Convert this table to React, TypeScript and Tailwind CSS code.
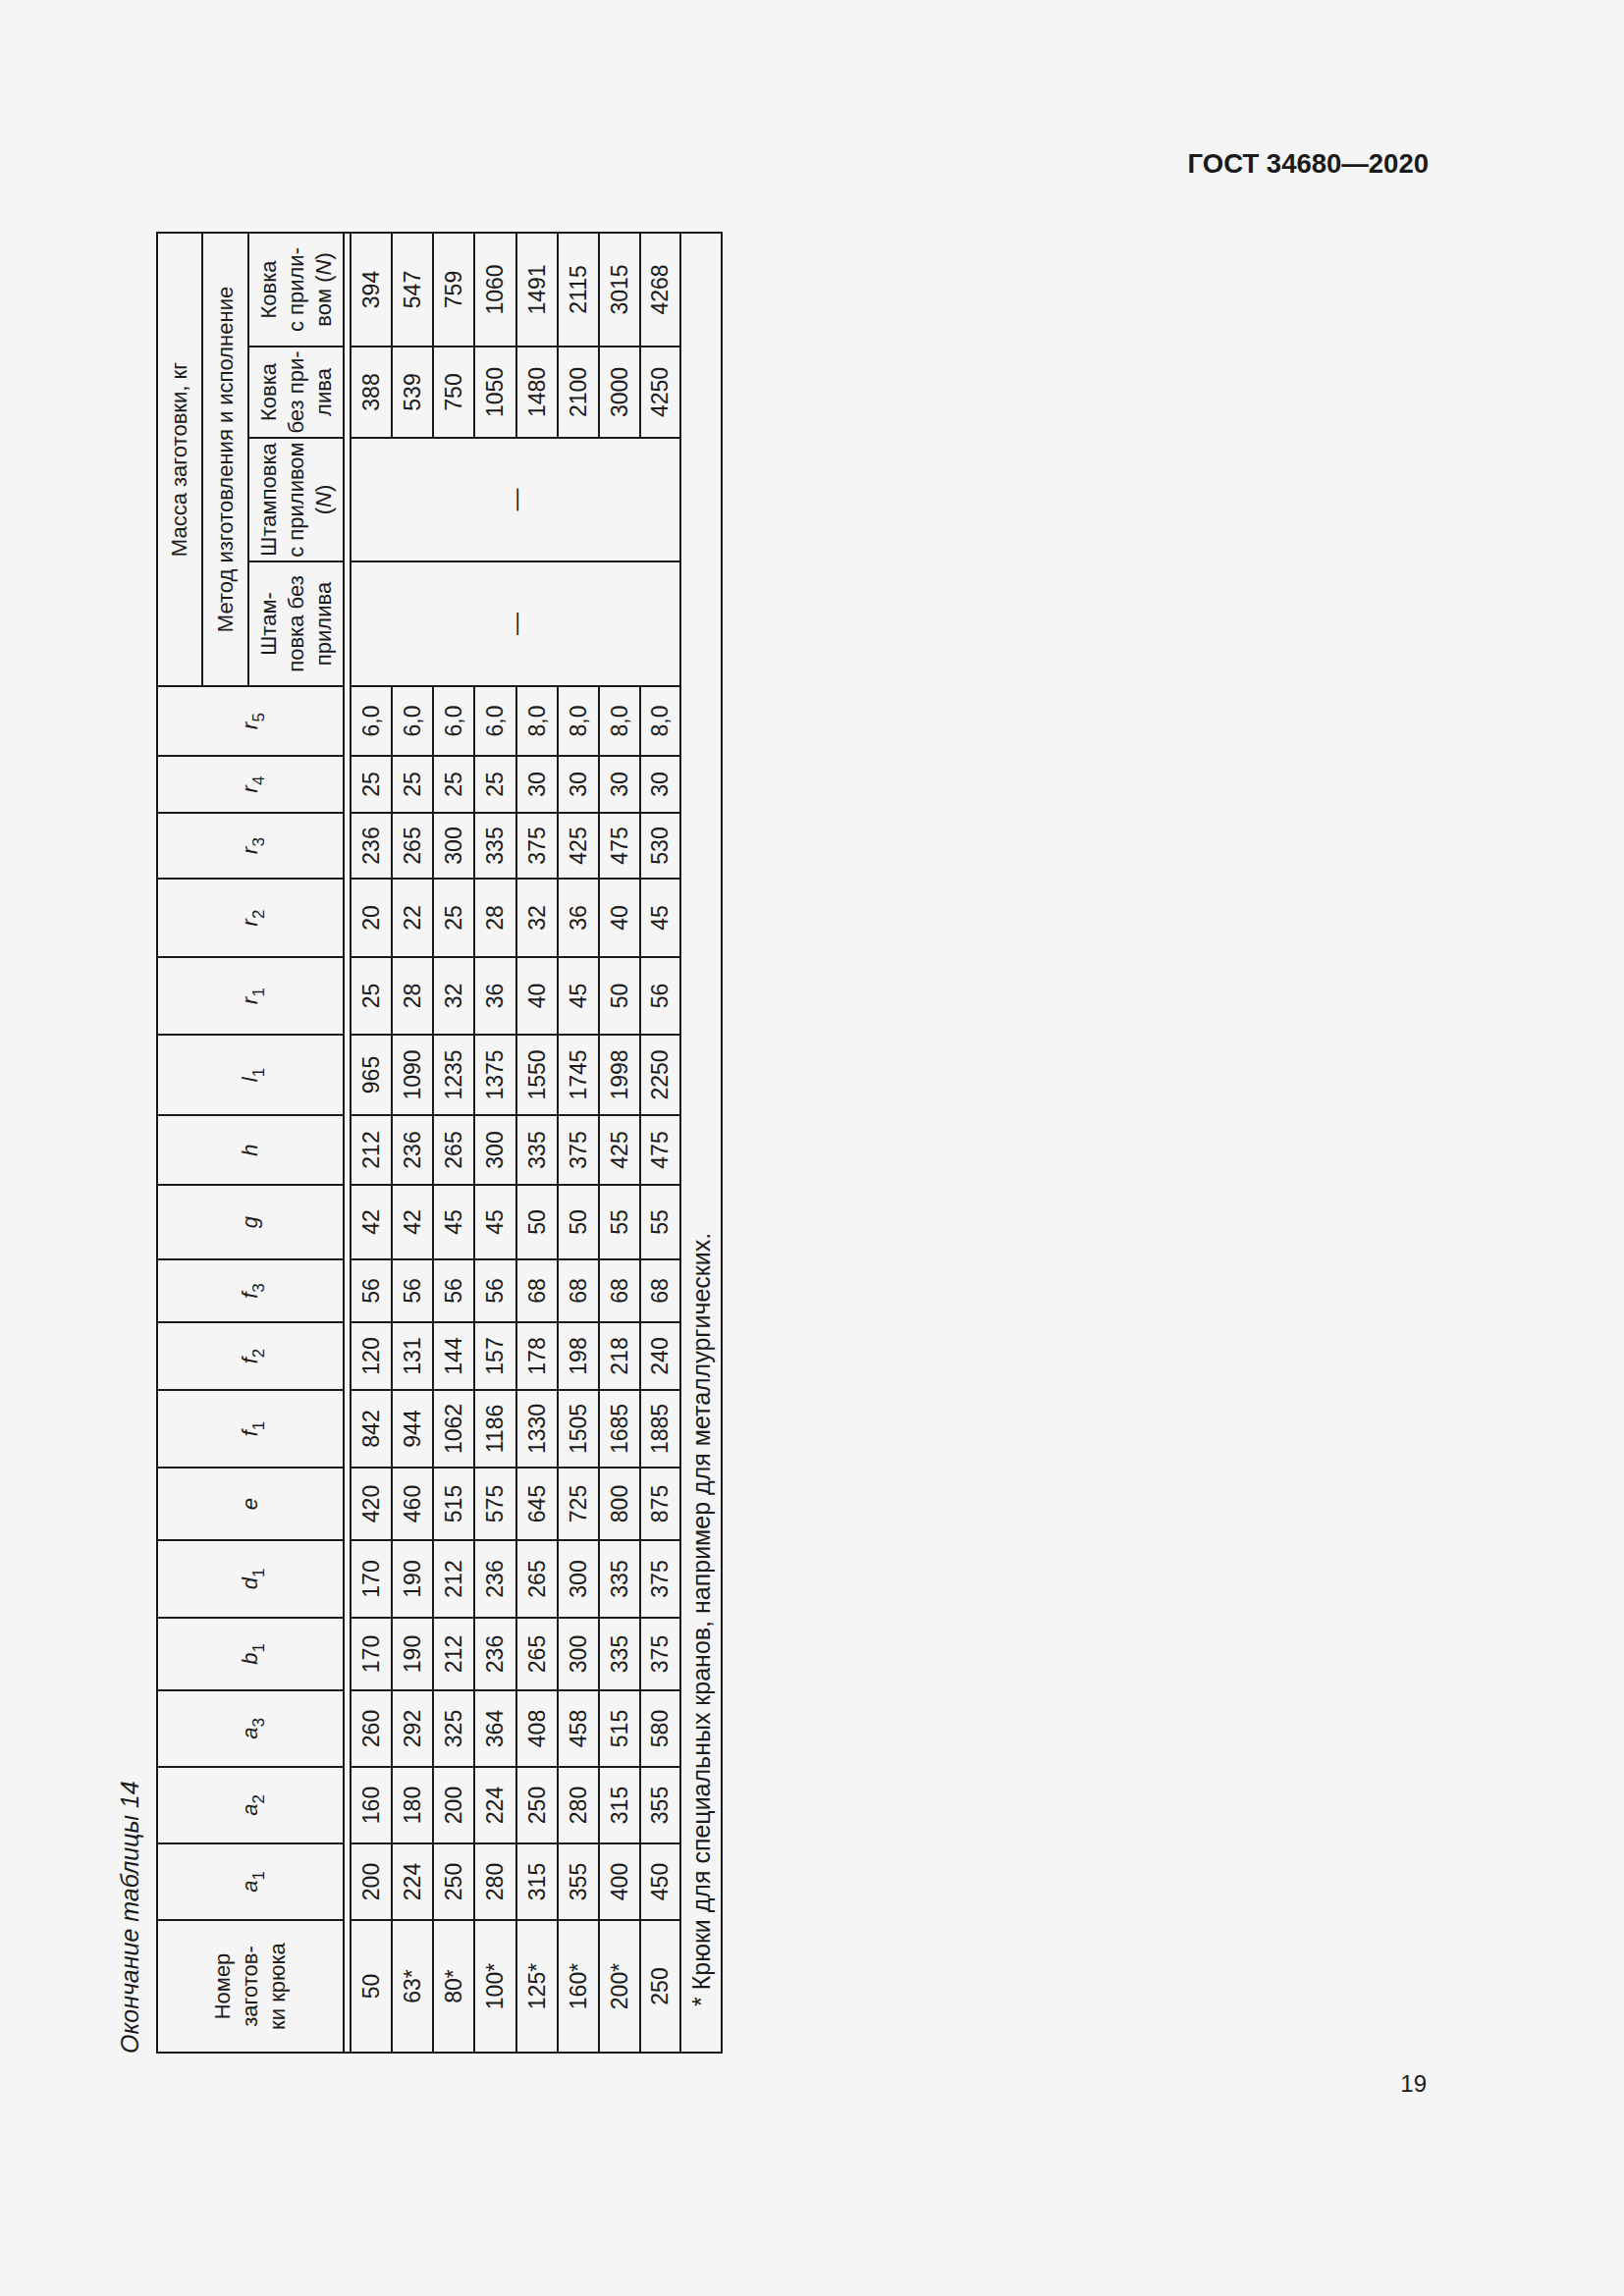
import React from 'react'

const colWidths = [
  'w-[135px]', 'w-[78px]', 'w-[78px]', 'w-[78px]', 'w-[74px]', 'w-[79px]', 'w-[74px]', 'w-[79px]',
  'w-[69px]', 'w-[64px]', 'w-[76px]', 'w-[71px]', 'w-[82px]', 'w-[79px]', 'w-[80px]', 'w-[67px]',
  'w-[58px]', 'w-[71px]', 'w-[127px]', 'w-[126px]', 'w-[93px]', 'w-[116px]',
]

const symbols: [string, string][] = [
  ['a', '1'], ['a', '2'], ['a', '3'], ['b', '1'], ['d', '1'], ['e', ''], ['f', '1'], ['f', '2'],
  ['f', '3'], ['g', ''], ['h', ''], ['l', '1'], ['r', '1'], ['r', '2'], ['r', '3'], ['r', '4'], ['r', '5'],
]

// one entry per hook blank: number, a1..r5, then forging masses
const rows = [
  { no: '50', v: ['200', '160', '260', '170', '170', '420', '842', '120', '56', '42', '212', '965', '25', '20', '236', '25', '6,0'], k1: '388', k2: '394' },
  { no: '63*', v: ['224', '180', '292', '190', '190', '460', '944', '131', '56', '42', '236', '1090', '28', '22', '265', '25', '6,0'], k1: '539', k2: '547' },
  { no: '80*', v: ['250', '200', '325', '212', '212', '515', '1062', '144', '56', '45', '265', '1235', '32', '25', '300', '25', '6,0'], k1: '750', k2: '759' },
  { no: '100*', v: ['280', '224', '364', '236', '236', '575', '1186', '157', '56', '45', '300', '1375', '36', '28', '335', '25', '6,0'], k1: '1050', k2: '1060' },
  { no: '125*', v: ['315', '250', '408', '265', '265', '645', '1330', '178', '68', '50', '335', '1550', '40', '32', '375', '30', '8,0'], k1: '1480', k2: '1491' },
  { no: '160*', v: ['355', '280', '458', '300', '300', '725', '1505', '198', '68', '50', '375', '1745', '45', '36', '425', '30', '8,0'], k1: '2100', k2: '2115' },
  { no: '200*', v: ['400', '315', '515', '335', '335', '800', '1685', '218', '68', '55', '425', '1998', '50', '40', '475', '30', '8,0'], k1: '3000', k2: '3015' },
  { no: '250', v: ['450', '355', '580', '375', '375', '875', '1885', '240', '68', '55', '475', '2250', '56', '45', '530', '30', '8,0'], k1: '4250', k2: '4268' },
]

const rowHeights = ['h-[42px]', 'h-[42px]', 'h-[42px]', 'h-[43px]', 'h-[42px]', 'h-[42px]', 'h-[42px]', 'h-[41px]']

const cell = 'border-2 border-[#1b1b1b] text-center align-middle p-0'
const head = 'border-2 border-[#1b1b1b] text-center align-middle p-0 font-normal text-[22px] leading-[28px]'

function Sym({ l, s }: { l: string; s: string }) {
  return (
    <span className="italic text-[22px]">
      {l}
      {s && <sub className="not-italic text-[17px] bottom-[-0.4em]">{s}</sub>}
    </span>
  )
}

export default function App() {
  return (
    <div className="w-[1654px] h-[2339px] bg-[#f5f5f5] text-[#1b1b1b] font-['Liberation_Sans',Arial,sans-serif] flex flex-col">
      <div className="pt-[151px] pr-[199px] text-right text-[27.5px] leading-[32px] font-bold">ГОСТ 34680—2020</div>

      {/* the table is printed sideways on the page */}
      <div className="mt-[53px] ml-[117px] w-[618px] h-[1856px]">
        <div className="w-[1856px] h-[618px] origin-top-left translate-y-[1856px] -rotate-90">
          <div className="italic text-[25px] leading-[30px] h-[30px]">Окончание таблицы 14</div>
          <table className="mt-[12px] w-[1856px] table-fixed border-collapse border-2 border-[#1b1b1b] text-[23px] leading-[27px]">
            <colgroup>
              {colWidths.map((w, i) => (
                <col key={i} className={w} />
              ))}
            </colgroup>
            <thead>
              <tr className="h-[46px]">
                <th rowSpan={3} className={head}>
                  Номер<br />заготов-<br />ки крюка
                </th>
                {symbols.map(([l, s], i) => (
                  <th key={i} rowSpan={3} className={head}>
                    <Sym l={l} s={s} />
                  </th>
                ))}
                <th colSpan={4} className={head}>Масса заготовки, кг</th>
              </tr>
              <tr className="h-[47px]">
                <th colSpan={4} className={head}>Метод изготовления и исполнение</th>
              </tr>
              <tr className="h-[97px]">
                <th className={head}>
                  Штам-<br />повка без<br />прилива
                </th>
                <th className={head}>
                  Штамповка<br />с приливом<br />(<span className="italic">N</span>)
                </th>
                <th className={head}>
                  Ковка<br />без при-<br />лива
                </th>
                <th className={head}>
                  Ковка<br />с прили-<br />вом (<span className="italic">N</span>)
                </th>
              </tr>
              <tr className="h-[7px]">
                <td colSpan={22} className="p-0 border-0" />
              </tr>
            </thead>
            <tbody>
              {rows.map((r, i) => (
                <tr key={r.no} className={rowHeights[i]}>
                  <td className={cell}>{r.no}</td>
                  {r.v.map((v, j) => (
                    <td key={j} className={cell}>{v}</td>
                  ))}
                  {i === 0 && (
                    <>
                      <td rowSpan={8} className={cell}>—</td>
                      <td rowSpan={8} className={cell}>—</td>
                    </>
                  )}
                  <td className={cell}>{r.k1}</td>
                  <td className={cell}>{r.k2}</td>
                </tr>
              ))}
              <tr className="h-[42px]">
                <td colSpan={22} className="border-2 border-[#1b1b1b] text-left align-middle pl-[46px] text-[25px]">
                  * Крюки для специальных кранов, например для металлургических.
                </td>
              </tr>
            </tbody>
          </table>
        </div>
      </div>

      <div className="mt-[17px] pr-[201px] text-right text-[24px] leading-[28px]">19</div>
    </div>
  )
}
